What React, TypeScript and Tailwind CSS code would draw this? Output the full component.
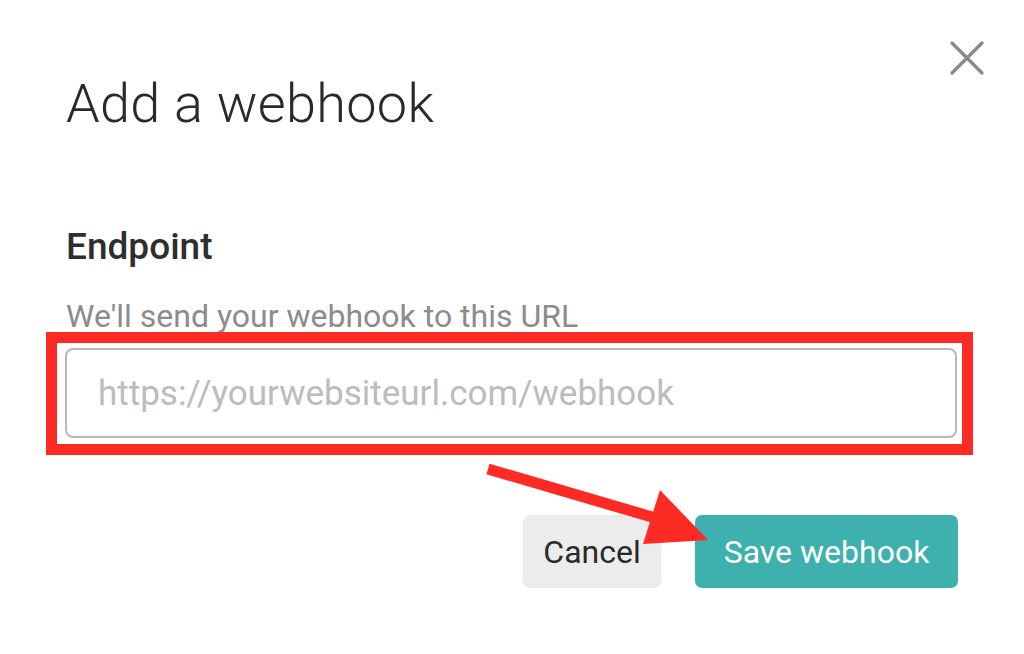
export default function App() {
  return (
    <div className="relative w-[1024px] h-[654px] bg-white overflow-hidden font-['Roboto',sans-serif]">
      {/* close */}
      <button className="absolute left-[948px] top-[39px] text-[#8a8a8a]" aria-label="Close">
        <svg width="38" height="38" viewBox="0 0 38 38" fill="none" stroke="currentColor" strokeWidth="3.4" strokeLinecap="round">
          <path d="M4 4 L34 34 M34 4 L4 34" />
        </svg>
      </button>

      <div className="flex flex-col px-[66px] pt-[77px]">
        <h1 className="text-[54px] leading-[54px] font-light text-[#2a2a2a] tracking-[0.3px]">Add a webhook</h1>

        <label className="mt-[97px] text-[37px] leading-[37px] font-medium text-[#2e2e2e]">Endpoint</label>
        <p className="mt-[35px] text-[32px] leading-[32px] text-[#8c8c8c]">We'll send your webhook to this URL</p>

        {/* highlight box */}
        <div className="ml-[-20px] mr-[-15px] border-[11px] border-[#fe2a24] pl-[8px] pr-[5px] pt-[5px] pb-[6px]">
          <input
            className="w-full h-[90px] rounded-[8px] border-2 border-[#b8b8b8] px-[31px] text-[35px] text-[#333] placeholder:text-[#bcbcbc] outline-none"
            placeholder="https://yourwebsiteurl.com/webhook"
          />
        </div>

        <div className="mt-[60px] flex justify-end gap-[34px]">
          <button className="w-[138px] h-[73px] rounded-[7px] bg-[#ececec] text-[32px] text-[#2a2a2a]">Cancel</button>
          <button className="w-[263px] h-[73px] rounded-[7px] bg-[#3eb0ad] text-[32px] text-white">Save webhook</button>
        </div>
      </div>

      {/* annotation arrow */}
      <svg className="absolute inset-0 pointer-events-none" width="1024" height="654">
        <line x1="488" y1="469" x2="652" y2="517" stroke="#fe2a24" strokeWidth="11" />
        <polygon points="660,490 708,540 643,544" fill="#fe2a24" />
      </svg>
    </div>
  );
}
